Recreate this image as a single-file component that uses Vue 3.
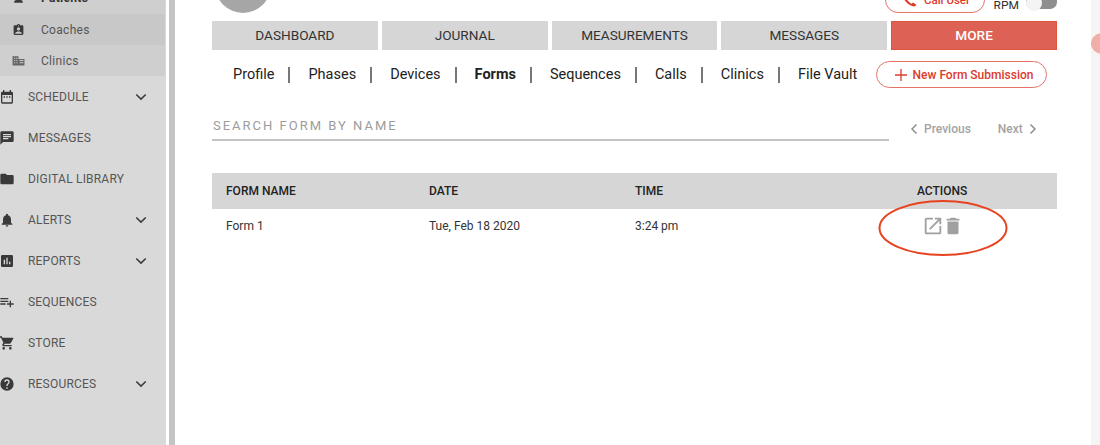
<template>
  <div class="page">
    <aside class="sidebar">
      <div class="sub-item patients">
        <svg class="sub-icon" viewBox="0 0 24 24"><path d="M12 12a4 4 0 1 0 0-8 4 4 0 0 0 0 8zm0 2c-2.700 0-8 1.300-8 4v2h16v-2c0-2.700-5.300-4-8-4z" /></svg>
        <span>Patients</span>
      </div>
      <div class="sub-item coaches">
        <svg class="sub-icon" viewBox="0 0 24 24"><path d="M19 4h-4.200c-.4-1.200-1.500-2-2.800-2s-2.400.8-2.800 2H5a2 2 0 0 0-2 2v14a2 2 0 0 0 2 2h14a2 2 0 0 0 2-2V6a2 2 0 0 0-2-2zm-7 0a1 1 0 1 1 0 2 1 1 0 0 1 0-2zm0 4a3 3 0 1 1 0 6 3 3 0 0 1 0-6zm6 12H6v-1.400c0-2 4-3.100 6-3.100s6 1.100 6 3.100V20z" /></svg>
        <span>Coaches</span>
      </div>
      <div class="sub-item clinics">
        <svg class="sub-icon light" viewBox="0 0 24 24"><path d="M1 4h11v5h11v12H1V4zm3 3v2h2V7H4zm4 0v2h2V7H8zm-4 4v2h2v-2H4zm4 0v2h2v-2H8zm-4 4v2h2v-2H4zm4 0v2h2v-2H8zm6-4v2h7v-2h-7zm0 4v2h7v-2h-7z" /></svg>
        <span>Clinics</span>
      </div>

      <div v-for="item in navItems" :key="item.label" class="nav-item">
        <svg class="nav-icon" viewBox="0 0 24 24"><path :d="item.icon" /></svg>
        <span class="nav-label">{{ item.label }}</span>
        <svg v-if="item.caret" class="caret" viewBox="0 0 14 9"><path d="M1.500 1.500 7 7l5.500-5.500" /></svg>
      </div>
    </aside>

    <div class="scroll-gap"></div>
    <div class="scrollbar"></div>

    <main class="content">
      <div class="top-bar">
        <div class="avatar"></div>
        <div class="top-right">
          <button class="call-btn">
            <svg viewBox="0 0 24 24"><path d="M6 3c-1.500 1-2 2.500-1.500 4.500C6 13 11 18 16.500 19.500c2 .5 3.500 0 4.500-1.500l-4-3-2 1.500C13 15.500 8.500 11 7.500 9L9 7 6 3z" /></svg>
            Call User
          </button>
          <span class="rpm">RPM</span>
          <span class="toggle"><span class="knob"></span></span>
        </div>
      </div>

      <nav class="tabs">
        <div v-for="tab in tabs" :key="tab" class="tab" :class="{ active: tab === 'MORE' }">{{ tab }}</div>
      </nav>

      <div class="sub-nav">
        <div class="links">
          <span v-for="link in links" :key="link" class="link" :class="{ current: link === 'Forms' }">{{ link }}</span>
        </div>
        <button class="new-btn">
          <svg viewBox="0 0 14 14"><path d="M7 1v12M1 7h12" /></svg>
          New Form Submission
        </button>
      </div>

      <div class="search-row">
        <div class="search">SEARCH FORM BY NAME</div>
        <div class="pager">
          <span class="pager-item">
            <svg viewBox="0 0 8 12"><path d="M6.500 1.500 2 6l4.500 4.500" /></svg>
            Previous
          </span>
          <span class="pager-item">
            Next
            <svg viewBox="0 0 8 12"><path d="M1.500 1.500 6 6l-4.500 4.500" /></svg>
          </span>
        </div>
      </div>

      <div class="table">
        <div class="row head">
          <span>FORM NAME</span>
          <span>DATE</span>
          <span>TIME</span>
          <span class="actions">ACTIONS</span>
        </div>
        <div class="row body">
          <span>Form 1</span>
          <span>Tue, Feb 18 2020</span>
          <span>3:24 pm</span>
          <span class="icons">
            <svg class="act" viewBox="0 0 24 24"><path d="M19 19H5V5h7V3H5a2 2 0 0 0-2 2v14a2 2 0 0 0 2 2h14a2 2 0 0 0 2-2v-7h-2v7zM14 3v2h3.600l-9.800 9.800 1.400 1.400L19 6.400V10h2V3h-7z" /></svg>
            <svg class="act" viewBox="0 0 24 24"><path d="M6 19a2 2 0 0 0 2 2h8a2 2 0 0 0 2-2V7H6v12zM19 4h-3.500l-1-1h-5l-1 1H5v2h14V4z" /></svg>
            <svg class="circle" viewBox="0 0 130 56"><ellipse cx="65" cy="28" rx="63.500" ry="27" /></svg>
          </span>
        </div>
      </div>
    </main>

    <div class="right-strip">
      <div class="blob"></div>
    </div>
  </div>
</template>

<script setup>
const navItems = [
  { label: 'SCHEDULE', caret: true, icon: 'M19 4h-1V1.500h-2V4H8V1.500H6V4H5a2 2 0 0 0-2 2v14a2 2 0 0 0 2 2h14a2 2 0 0 0 2-2V6a2 2 0 0 0-2-2zm0 16H5V9h14v11zM7 11h2v2H7v-2zm4 0h2v2h-2v-2zm4 0h2v2h-2v-2z' },
  { label: 'MESSAGES', caret: false, icon: 'M20 2H4a2 2 0 0 0-2 2v18l4-4h14a2 2 0 0 0 2-2V4a2 2 0 0 0-2-2zM6 9h12v2H6V9zm8 5H6v-2h8v2zm4-6H6V6h12v2z' },
  { label: 'DIGITAL LIBRARY', caret: false, icon: 'M10 4H4a2 2 0 0 0-2 2v12a2 2 0 0 0 2 2h16a2 2 0 0 0 2-2V8a2 2 0 0 0-2-2h-8l-2-2z' },
  { label: 'ALERTS', caret: true, icon: 'M12 22a2 2 0 0 0 2-2h-4a2 2 0 0 0 2 2zm6-6v-5c0-3.100-1.600-5.600-4.500-6.300V4a1.500 1.500 0 0 0-3 0v.7C7.600 5.400 6 7.900 6 11v5l-2 2v1h16v-1l-2-2z' },
  { label: 'REPORTS', caret: true, icon: 'M19 3H5a2 2 0 0 0-2 2v14a2 2 0 0 0 2 2h14a2 2 0 0 0 2-2V5a2 2 0 0 0-2-2zM9 17H7v-7h2v7zm4 0h-2V7h2v10zm4 0h-2v-4h2v4z' },
  { label: 'SEQUENCES', caret: false, icon: 'M14 10H2v2h12v-2zm0-4H2v2h12V6zm4 8v-4h-2v4h-4v2h4v4h2v-4h4v-2h-4zM2 16h8v-2H2v2z' },
  { label: 'STORE', caret: false, icon: 'M7 18a2 2 0 1 0 0 4 2 2 0 0 0 0-4zM1 2v2h2l3.600 7.600-1.400 2.400C4.500 15.400 5.500 17 7 17h12v-2H7.400l1.100-2h7.500c.7 0 1.400-.4 1.700-1l3.600-6.500A1 1 0 0 0 21 4H5.200l-.9-2H1zm16 16a2 2 0 1 0 0 4 2 2 0 0 0 0-4z' },
  { label: 'RESOURCES', caret: true, icon: 'M12 2a10 10 0 1 0 0 20 10 10 0 0 0 0-20zm1 17h-2v-2h2v2zm2.100-7.700-.9.900c-.7.700-1.200 1.300-1.200 2.800h-2v-.5c0-1.100.5-2.100 1.200-2.800l1.200-1.300c.4-.3.600-.8.600-1.400a2 2 0 0 0-4 0H8a4 4 0 0 1 8 0c0 .9-.4 1.700-.9 2.300z' }
]

const tabs = ['DASHBOARD', 'JOURNAL', 'MEASUREMENTS', 'MESSAGES', 'MORE']
const links = ['Profile', 'Phases', 'Devices', 'Forms', 'Sequences', 'Calls', 'Clinics', 'File Vault']
</script>

<style>
html, body {
  margin: 0;
  overflow: hidden;
  background: #fff;
}
</style>

<style scoped>
.page {
  display: flex;
  width: 1100px;
  height: 445px;
  overflow: hidden;
  font-family: Roboto, "Liberation Sans", sans-serif;
  background: #fff;
}

.sidebar {
  flex: 0 0 166px;
  height: 445px;
  background: #d9d9d9;
  overflow: hidden;
}

.sub-item {
  display: flex;
  align-items: center;
  height: 31px;
  margin-right: 1px;
  font-size: 12px;
  letter-spacing: 0.3px;
  color: #555;
  background: #cfcfcf;
}

.patients {
  box-sizing: border-box;
  height: 14px;
  padding-bottom: 9px;
  align-items: flex-end;
  font-weight: 700;
  color: #333;
  overflow: hidden;
}

.coaches {
  background: #c8c8c8;
}

.sub-icon {
  width: 13px;
  height: 13px;
  margin: 0 16px 0 12px;
  fill: #3a3a3a;
  flex-shrink: 0;
}

.sub-icon.light {
  fill: #666;
}

.nav-item {
  display: flex;
  align-items: center;
  height: 41px;
  font-size: 12px;
  letter-spacing: 0.2px;
  color: #555;
}

.nav-icon {
  width: 16px;
  height: 16px;
  margin-left: -1px;
  margin-right: 13px;
  fill: #3a3a3a;
  flex-shrink: 0;
}

.nav-label {
  flex: 1;
}

.caret {
  width: 12px;
  height: 8px;
  margin-right: 19px;
  fill: none;
  stroke: #3a3a3a;
  stroke-width: 1.800;
}

.scroll-gap {
  flex: 0 0 3px;
}

.scrollbar {
  flex: 0 0 6px;
  background: #c4c4c4;
}

.content {
  flex: 0 0 845px;
  margin-left: 37px;
  display: flex;
  flex-direction: column;
}

.top-bar {
  display: flex;
  justify-content: space-between;
  height: 21px;
}

.avatar {
  width: 56px;
  height: 56px;
  margin: -43px 0 0 3px;
  border-radius: 50%;
  background: #a6a6a6;
}

.top-right {
  display: flex;
  align-items: flex-end;
  height: 13px;
}

.call-btn {
  display: flex;
  align-items: center;
  justify-content: center;
  gap: 5px;
  width: 100px;
  height: 26px;
  margin-top: -13px;
  padding: 0;
  border: 1px solid #e57368;
  border-radius: 13px;
  background: #fff;
  color: #dc3b2e;
  font: 500 11.500px Roboto, sans-serif;
}

.call-btn svg {
  width: 20px;
  height: 20px;
  fill: #dc3b2e;
}

.rpm {
  margin-left: 9px;
  margin-right: 7px;
  font-size: 12px;
  line-height: 13px;
  color: #333;
  height: 9px;
  overflow: hidden;
  align-self: flex-start;
}

.toggle {
  position: relative;
  display: block;
  width: 31px;
  height: 9px;
  align-self: flex-start;
  background: #8f8f8f;
  border-radius: 0 0 7px 7px;
}

.knob {
  position: absolute;
  left: 0;
  top: -5px;
  width: 16px;
  height: 16px;
  border-radius: 50%;
  background: #f4f4f4;
}

.tabs {
  display: grid;
  grid-template-columns: repeat(5, 1fr);
  gap: 4px;
  height: 29px;
}

.tab {
  display: flex;
  align-items: center;
  justify-content: center;
  padding-bottom: 1px;
  background: #d6d6d6;
  font-size: 13.600px;
  color: #333;
}

.tab.active {
  background: #dd6154;
  box-shadow: inset 0 0 0 1px #e0533f;
  color: #fff;
  font-weight: 500;
}

.sub-nav {
  display: flex;
  align-items: center;
  justify-content: space-between;
  height: 27px;
  margin-top: 11px;
}

.links {
  display: flex;
  align-items: center;
  padding-left: 21px;
}

.link {
  padding-right: 14px;
  margin-right: 18px;
  border-right: 2px solid #777;
  font-size: 14.500px;
  line-height: 16px;
  color: #222;
}

.link:last-child {
  border-right: 0;
  margin-right: 0;
  padding-right: 0;
}

.link.current {
  font-weight: 700;
}

.new-btn {
  display: flex;
  align-items: center;
  justify-content: center;
  gap: 5px;
  box-sizing: border-box;
  width: 171px;
  height: 27px;
  margin-right: 10px;
  padding: 0 0 0 4px;
  border: 1px solid #e57368;
  border-radius: 14px;
  background: #fff;
  color: #dc3b2e;
  font: 500 12px Roboto, sans-serif;
}

.new-btn svg {
  width: 14px;
  height: 14px;
  fill: none;
  stroke: #dc3b2e;
  stroke-width: 1.300;
}

.search-row {
  display: flex;
  height: 32px;
  margin-top: 26px;
}

.search {
  flex: 0 0 677px;
  box-sizing: border-box;
  height: 27px;
  padding: 3px 0 0 1px;
  border-bottom: 2px solid #c4c4c4;
  font-size: 13px;
  line-height: 17px;
  letter-spacing: 2px;
  color: #9c9c9c;
}

.pager {
  display: flex;
  flex: 1;
  gap: 27px;
  height: 30px;
  padding-left: 21px;
  align-items: center;
  font-size: 12px;
  font-weight: 500;
  color: #a3a3a3;
}

.pager-item {
  display: flex;
  align-items: center;
  gap: 6px;
}

.pager svg {
  width: 8px;
  height: 12px;
  fill: none;
  stroke: #8f8f8f;
  stroke-width: 1.500;
}

.table {
  margin-top: 27px;
}

.row {
  display: grid;
  grid-template-columns: 203px 206px 230px 1fr;
  padding-left: 14px;
  font-size: 12px;
  color: #333;
}

.row.head {
  height: 36px;
  align-items: center;
  background: #d6d6d6;
  font-weight: 500;
  color: #222;
}

.row.body {
  height: 34px;
  align-items: center;
}

.actions {
  padding-left: 52px;
}

.icons {
  position: relative;
  display: flex;
  align-items: center;
  gap: 0;
  padding-left: 57px;
}

.act {
  width: 22px;
  height: 22px;
  margin-right: -2px;
  fill: #a0a0a0;
  flex-shrink: 0;
}

.circle {
  position: absolute;
  left: 13px;
  top: -15px;
  width: 130px;
  height: 56px;
  fill: none;
  stroke: #e8431f;
  stroke-width: 2;
}

.right-strip {
  position: relative;
  flex: 0 0 9px;
  margin-left: 34px;
  background: #f5f5f5;
}

.blob {
  position: absolute;
  left: 0;
  top: 33px;
  width: 24px;
  height: 21px;
  border-radius: 50%;
  background: #efafa8;
}
</style>
